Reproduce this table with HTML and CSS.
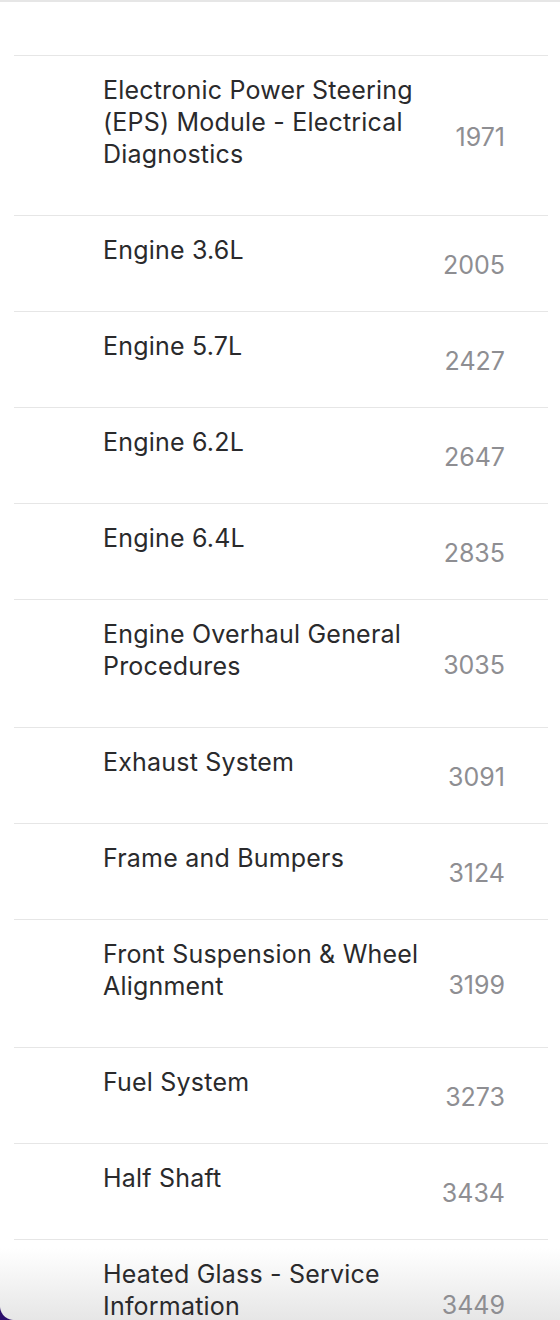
FILE: index.html
```html
<!DOCTYPE html>
<html lang="en">
<head>
<meta charset="utf-8">
<link rel="stylesheet" href="styles.css">
</head>
<body>
<div class="fade"></div>
<div class="topbar"></div>
<div class="page">
  <ul class="list">
    <li class="row"><span class="title">Electronic Power Steering (EPS) Module - Electrical Diagnostics</span><span class="num">1971</span></li>
    <li class="row"><span class="title">Engine 3.6L</span><span class="num">2005</span></li>
    <li class="row"><span class="title">Engine 5.7L</span><span class="num">2427</span></li>
    <li class="row"><span class="title">Engine 6.2L</span><span class="num">2647</span></li>
    <li class="row"><span class="title">Engine 6.4L</span><span class="num">2835</span></li>
    <li class="row"><span class="title">Engine Overhaul General Procedures</span><span class="num">3035</span></li>
    <li class="row"><span class="title">Exhaust System</span><span class="num">3091</span></li>
    <li class="row"><span class="title">Frame and Bumpers</span><span class="num">3124</span></li>
    <li class="row"><span class="title">Front Suspension &amp; Wheel Alignment</span><span class="num">3199</span></li>
    <li class="row"><span class="title">Fuel System</span><span class="num">3273</span></li>
    <li class="row"><span class="title">Half Shaft</span><span class="num">3434</span></li>
    <li class="row"><span class="title">Heated Glass - Service Information</span><span class="num">3449</span></li>
  </ul>
</div>
<div class="corner"></div>
</body>
</html>
```
FILE: styles.css
```css
html, body {
  margin: 0;
  padding: 0;
  background: #ffffff;
  height: 1320px;
  overflow: hidden;
}
body {
  font-family: Inter, "Noto Sans", sans-serif;
  color: #2a2a2c;
  position: relative;
}
.topbar {
  position: relative;
  height: 2px;
  background: #e6e6e6;
}
.page {
  position: relative;
  z-index: 1;
  padding: 53px 12px 0 14px;
}
.list {
  list-style: none;
  margin: 0;
  padding: 0;
  border-top: 1px solid #e6e6e6;
}
.row {
  display: flex;
  align-items: center;
  border-bottom: 1px solid #e6e6e6;
  padding: 18px 43px 45px 89px;
}
.title {
  flex: 1;
  align-self: flex-start;
  font-size: 25px;
  letter-spacing: 0.2px;
  line-height: 32px;
  max-width: 330px;
}
.num {
  margin-left: auto;
  font-size: 25px;
  line-height: 30px;
  color: #8e8e92;
  position: relative;
  top: 15px;
}
.fade {
  position: absolute;
  z-index: 0;
  left: 0;
  right: 0;
  bottom: 0;
  height: 72px;
  background: linear-gradient(to bottom, rgba(232,232,232,0), rgba(230,230,230,1));
  pointer-events: none;
}
.corner {
  position: absolute;
  z-index: 2;
  left: 0;
  bottom: 0;
  width: 14px;
  height: 14px;
  background: radial-gradient(circle at 100% 0, transparent 13.5px, #2c0f6c 14.5px);
}
```
